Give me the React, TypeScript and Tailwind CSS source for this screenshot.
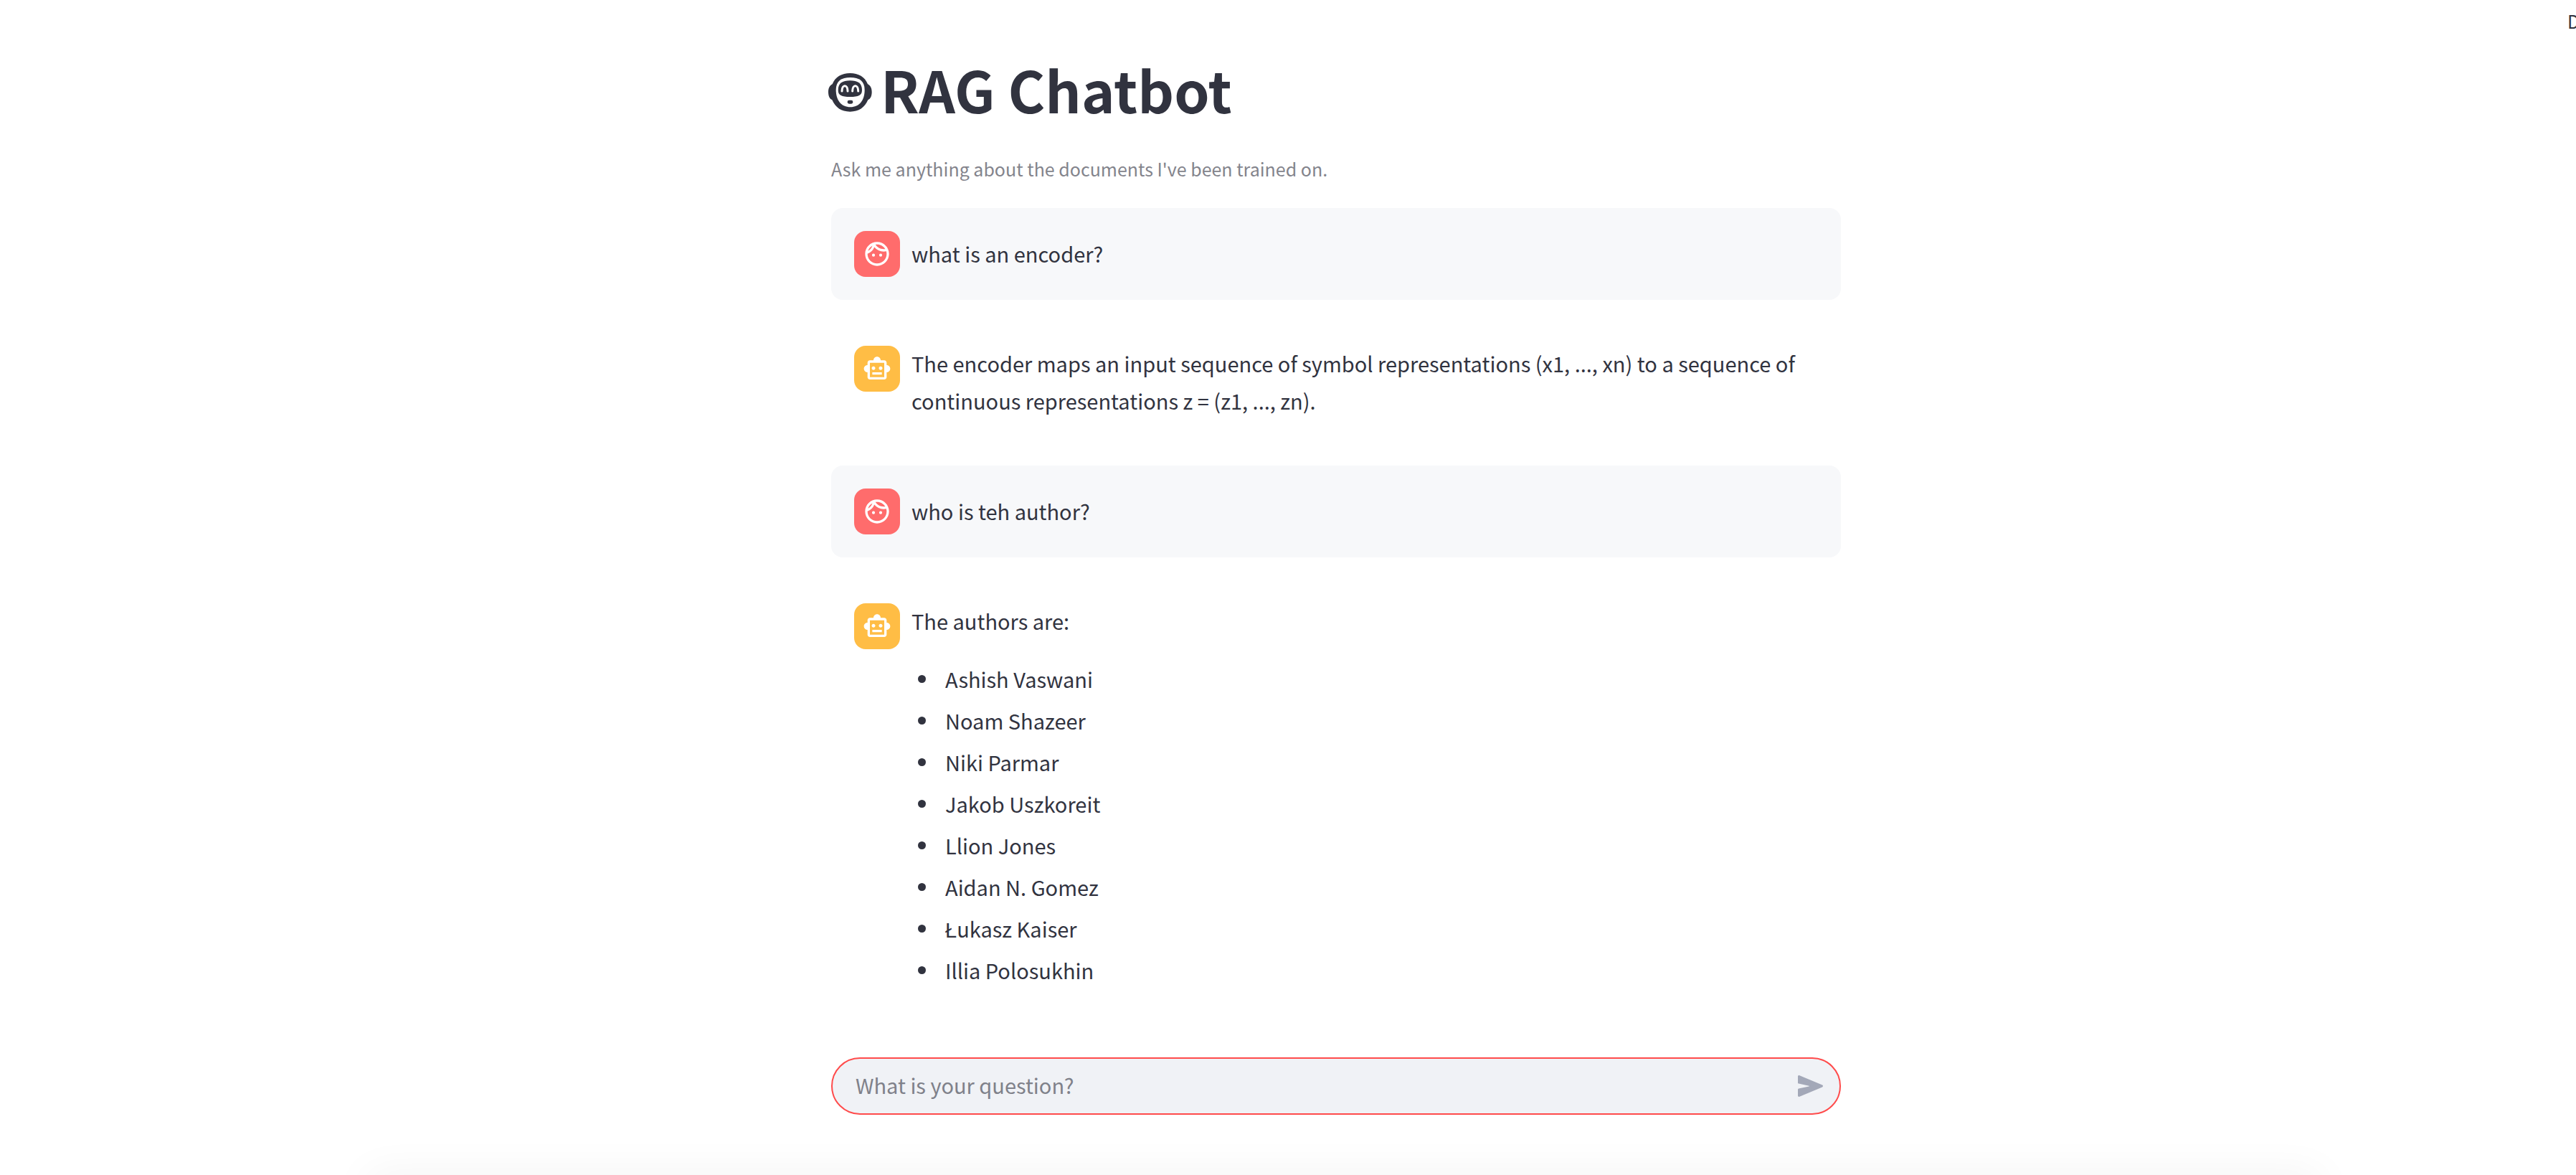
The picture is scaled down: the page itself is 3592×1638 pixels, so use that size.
import type { ReactNode } from "react";
import { MdOutlineFace, MdOutlineSmartToy } from "react-icons/md";

const authors = [
  "Ashish Vaswani",
  "Noam Shazeer",
  "Niki Parmar",
  "Jakob Uszkoreit",
  "Llion Jones",
  "Aidan N. Gomez",
  "Łukasz Kaiser",
  "Illia Polosukhin",
];

function RobotGlyph() {
  return (
    <svg viewBox="0 0 183 168" className="h-[56px] w-[61px] shrink-0" aria-hidden="true">
      <path
        fill="currentColor"
        d="M91 0C126 0 153 15 165 46C176 51 182 63 182 79C182 95 177 108 166 112C152 144 128 161 91 161C54 161 30 144 16 112C5 108 0 95 0 79C0 63 6 51 17 46C29 15 56 0 91 0Z"
      />
      <path
        fill="#fff"
        d="M92 18C130 18 152 33 152 70C152 114 130 142 92 142C54 142 32 114 32 70C32 33 54 18 92 18Z"
      />
      <path
        fill="currentColor"
        d="M91 31C123 31 141 42 141 71C141 92 126 99 91 99C56 99 41 92 41 71C41 42 59 31 91 31Z"
      />
      <path
        fill="none"
        stroke="#fff"
        strokeWidth="9"
        strokeLinecap="round"
        d="M57 75C57 46 81 46 81 75M101 75C101 46 125 46 125 75"
      />
      <rect x="80" y="113" width="23" height="15" rx="7" fill="currentColor" />
    </svg>
  );
}

function Message({ role, children }: { role: "user" | "assistant"; children: ReactNode }) {
  const user = role === "user";
  return (
    <article
      className={
        user
          ? "flex items-center gap-4 rounded-2xl bg-[#f7f8fa] p-8"
          : "flex items-start gap-4 rounded-2xl p-8"
      }
    >
      <div
        className={
          user
            ? "flex size-16 shrink-0 items-center justify-center rounded-2xl bg-[#ff6c6c] text-white"
            : "flex size-16 shrink-0 items-center justify-center rounded-2xl bg-[#ffbd45] text-white"
        }
      >
        {user ? <MdOutlineFace className="size-10" /> : <MdOutlineSmartToy className="size-10" />}
      </div>
      <div className="-mt-0.5 min-w-0 flex-1 pb-px text-[29px] leading-[52px]">{children}</div>
    </article>
  );
}

export default function App() {
  return (
    <div className="flex min-h-screen flex-col overflow-hidden bg-white font-['Noto_Sans_CJK_SC',sans-serif] text-[#31333f]">
      <header className="flex h-[60px] justify-end overflow-hidden">
        <button type="button" className="w-3 text-left text-[25px] whitespace-nowrap">
          Deploy
        </button>
      </header>

      <main className="flex flex-1 flex-col pl-[134px]">
        <div className="mx-auto flex w-full max-w-[1408px] flex-1 flex-col">
          <h1 className="-ml-1 flex items-baseline gap-3 pt-1 text-[79px] leading-[120px] font-bold">
            <RobotGlyph />
            RAG Chatbot
          </h1>
          <p className="mt-7 text-[25px] leading-[46px] text-[#83848c]">
            Ask me anything about the documents I've been trained on.
          </p>

          <section className="mt-8 flex flex-col gap-8" aria-label="Conversation">
            <Message role="user">what is an encoder?</Message>
            <Message role="assistant">
              The encoder maps an input sequence of symbol representations (x1, ..., xn) to a sequence of
              continuous representations z = (z1, ..., zn).
            </Message>
            <Message role="user">who is teh author?</Message>
            <Message role="assistant">
              <p>The authors are:</p>
              <ul className="mt-[26px]">
                {authors.map((name) => (
                  <li
                    key={name}
                    className="flex items-center gap-[27px] pl-[9px] leading-[58px] before:size-[11px] before:rounded-full before:bg-[#31333f]"
                  >
                    {name}
                  </li>
                ))}
              </ul>
            </Message>
          </section>

          <form
            onSubmit={(e) => e.preventDefault()}
            className="mt-auto flex h-20 items-center rounded-full border-2 border-[#ff4b4b] bg-[#f0f2f6] pr-[23px] pl-8"
          >
            <input
              type="text"
              aria-label="What is your question?"
              placeholder="What is your question?"
              className="h-full min-w-0 flex-1 bg-transparent pb-1 text-[29px] outline-none placeholder:text-[#7f818a]"
            />
            <button type="submit" aria-label="Send message" className="text-[#a3a8b8]">
              <svg viewBox="0 0 35 30" className="h-[30px] w-[35px]" fill="currentColor" aria-hidden="true">
                <path d="M0 1.5C0 .4 1.2-.3 2.3.2L34 13.6C35.3 14.2 35.3 15.8 34 16.4L2.3 29.8C1.2 30.3 0 29.6 0 28.5V19.8C0 19.2.4 18.7 1 18.6L15.5 15.5C16 15.4 16 14.8 15.5 14.7L1 11.6C.4 11.5 0 11 0 10.4Z" />
              </svg>
            </button>
          </form>
        </div>
      </main>

      <footer className="flex h-[84px] flex-col justify-end overflow-hidden pr-[352px] pl-[508px]">
        <div className="-mb-10 h-10 rounded-full shadow-[0_0_60px_rgba(0,0,0,0.06)]" />
      </footer>
    </div>
  );
}
